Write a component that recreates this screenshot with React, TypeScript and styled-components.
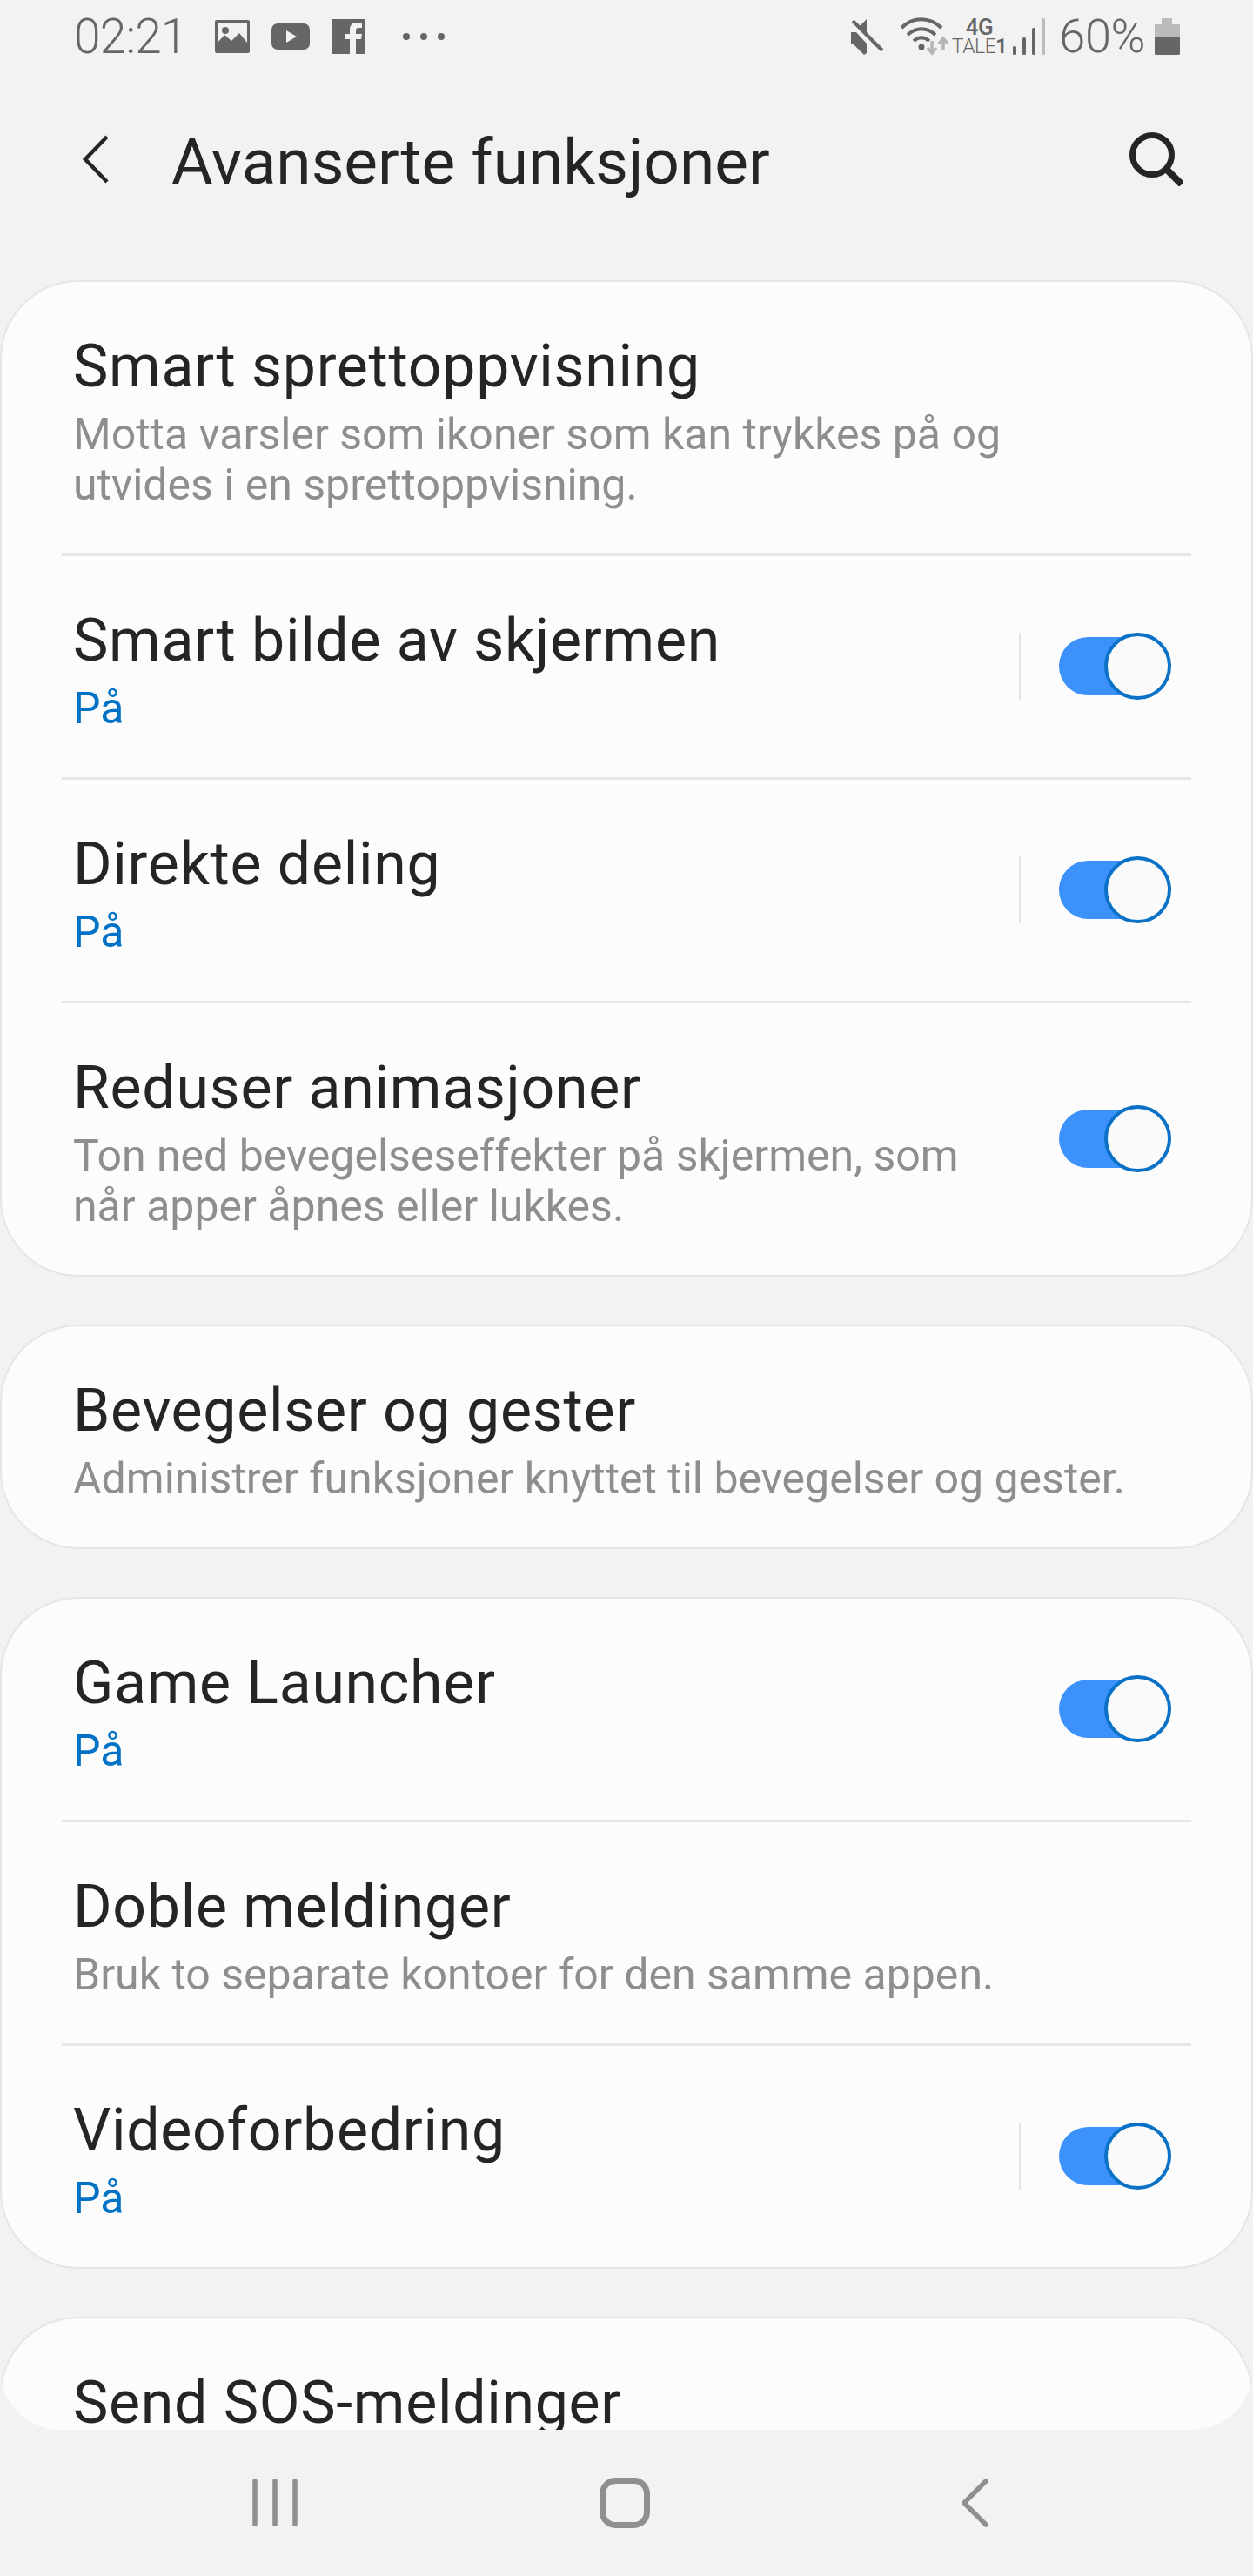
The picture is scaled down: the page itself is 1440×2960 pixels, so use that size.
import { Fragment } from "react";
import styled, { createGlobalStyle } from "styled-components";

const GlobalStyle = createGlobalStyle`
    html, body {
        margin: 0;
        padding: 0;
        background: #f2f2f2;
    }

    * {
        box-sizing: border-box;
    }
`;

const Screen = styled.div`
    display: flex;
    flex-direction: column;
    width: 1440px;
    height: 2960px;
    overflow: hidden;
    background: #f2f2f2;
    font-family: Roboto, "Noto Sans", sans-serif;
`;

const StatusBar = styled.div`
    display: flex;
    flex: none;
    align-items: center;
    justify-content: space-between;
    height: 84px;
    padding: 0 84px 0 85px;
    color: #666;
`;

const StatusGroup = styled.div`
    display: flex;
    align-items: center;
`;

const Clock = styled.span`
    font-size: 55px;
    font-weight: 300;
    letter-spacing: -0.8px;
    line-height: 1;
`;

const StatusIcon = styled.svg<{ $left: number }>`
    display: block;
    flex: none;
    margin-left: ${({ $left }) => $left}px;
`;

const NetworkLabel = styled.div`
    display: flex;
    flex-direction: column;
    align-items: center;
    width: 60px;
    margin-left: 2px;
    color: #666;
`;

const NetworkType = styled.span`
    font-size: 26px;
    font-weight: 500;
    letter-spacing: -0.6px;
    line-height: 24px;
`;

const SimLabel = styled.span`
    font-size: 23px;
    font-weight: 300;
    letter-spacing: -0.5px;
    line-height: 22px;
    white-space: nowrap;

    b {
        font-weight: 700;
    }
`;

const Battery = styled.span`
    margin-left: 15px;
    font-size: 54px;
    font-weight: 300;
    letter-spacing: -0.4px;
    line-height: 1;
`;

const Toolbar = styled.header`
    display: flex;
    flex: none;
    align-items: center;
    height: 198px;
    margin-bottom: 40px;
    padding: 0 80px 0 94px;
    color: #252525;
`;

const ToolbarTitle = styled.h1`
    flex: 1;
    margin: 6px 0 0 72px;
    font-size: 73px;
    font-weight: 400;
    line-height: 1;
`;

const Scroller = styled.main`
    display: flex;
    flex: 1;
    flex-direction: column;
    gap: 55px;
    min-height: 0;
    overflow: hidden;
    border-radius: 0 0 70px 70px;
`;

const Card = styled.section`
    flex: none;
    overflow: hidden;
    background: #fcfcfc;
    border: 2px solid #e6e6e6;
    border-radius: 90px;
`;

const Row = styled.div`
    display: flex;
    align-items: center;
    padding: 48px 92px 50px 82px;
`;

const RowText = styled.div`
    flex: 1;
    min-width: 0;
`;

const RowTitle = styled.div`
    color: #252525;
    font-size: 68px;
    letter-spacing: 0.7px;
    line-height: 98px;
    white-space: nowrap;
`;

const RowSub = styled.div<{ $on?: boolean }>`
    color: ${({ $on }) => ($on ? "#0072c6" : "#8e8e8e")};
    font-size: 50px;
    line-height: 58px;
    white-space: pre-line;
`;

const RowDivider = styled.div`
    height: 3px;
    margin: 0 69px;
    background: #e6e6e6;
`;

const VerticalRule = styled.div`
    flex: none;
    width: 2px;
    height: 77px;
    margin-right: 44px;
    background: #e4e4e4;
`;

const Switch = styled.div`
    position: relative;
    flex: none;
    width: 129px;
    height: 77px;
`;

const SwitchTrack = styled.div`
    width: 112px;
    height: 67px;
    margin-top: 5px;
    background: #3d91fb;
    border-radius: 34px;
`;

const SwitchKnob = styled.div`
    position: absolute;
    top: 0;
    right: 0;
    width: 77px;
    height: 77px;
    background: #fafafa;
    border: 4px solid #0a72c6;
    border-radius: 50%;
`;

const NavBar = styled.nav`
    display: grid;
    flex: none;
    grid-template-columns: repeat(3, 402px);
    align-items: center;
    justify-items: center;
    height: 168px;
    padding-left: 115px;
`;

interface Item {
    title: string;
    sub?: string;
    on?: boolean;
    toggle?: boolean;
    rule?: boolean;
}

const groups: Item[][] = [
    [
        {
            title: "Smart sprettoppvisning",
            sub: "Motta varsler som ikoner som kan trykkes på og\nutvides i en sprettoppvisning.",
        },
        { title: "Smart bilde av skjermen", sub: "På", on: true, toggle: true, rule: true },
        { title: "Direkte deling", sub: "På", on: true, toggle: true, rule: true },
        {
            title: "Reduser animasjoner",
            sub: "Ton ned bevegelseseffekter på skjermen, som\nnår apper åpnes eller lukkes.",
            toggle: true,
        },
    ],
    [
        {
            title: "Bevegelser og gester",
            sub: "Administrer funksjoner knyttet til bevegelser og gester.",
        },
    ],
    [
        { title: "Game Launcher", sub: "På", on: true, toggle: true },
        {
            title: "Doble meldinger",
            sub: "Bruk to separate kontoer for den samme appen.",
        },
        { title: "Videoforbedring", sub: "På", on: true, toggle: true, rule: true },
    ],
    [{ title: "Send SOS-meldinger" }],
];

const SettingRow = ({ title, sub, on, toggle, rule }: Item) => (
    <Row>
        <RowText>
            <RowTitle>{title}</RowTitle>
            {sub && <RowSub $on={on}>{sub}</RowSub>}
        </RowText>
        {rule && <VerticalRule />}
        {toggle && (
            <Switch>
                <SwitchTrack />
                <SwitchKnob />
            </Switch>
        )}
    </Row>
);

export default function App() {
    return (
        <Screen>
            <GlobalStyle />
            <StatusBar>
                <StatusGroup>
                    <Clock>02:21</Clock>
                    <StatusIcon $left={32} width="40" height="38" viewBox="0 0 40 38">
                        <rect width="40" height="38" rx="2" fill="#666" />
                        <rect x="3" y="3" width="34" height="27" fill="#f2f2f2" />
                        <circle cx="12" cy="12" r="4" fill="#666" />
                        <path d="M3 26l8-9 8 7 9-9 9 11v9H3z" fill="#666" />
                    </StatusIcon>
                    <StatusIcon $left={25} width="44" height="30" viewBox="0 0 44 30">
                        <rect width="44" height="30" rx="7" fill="#666" />
                        <path d="M17 8l12 7-12 7z" fill="#f2f2f2" />
                    </StatusIcon>
                    <StatusIcon $left={26} width="38" height="40" viewBox="0 0 38 40">
                        <rect width="38" height="40" fill="#666" />
                        <path d="M20 40V23h-5v-6h5v-5c0-5 3-8 8-8h6v6h-4c-2 0-3 1-3 3v4h7l-1 6h-6v17z" fill="#f2f2f2" />
                    </StatusIcon>
                    <StatusIcon $left={43} width="48" height="10" viewBox="0 0 48 10">
                        <circle cx="4" cy="5" r="4" fill="#666" />
                        <circle cx="24" cy="5" r="4" fill="#666" />
                        <circle cx="44" cy="5" r="4" fill="#666" />
                    </StatusIcon>
                </StatusGroup>
                <StatusGroup>
                    <StatusIcon $left={0} width="38" height="42" viewBox="0 0 38 42">
                        <path d="M0 16h6l12 13v11l-3 2L2 29H0z" fill="#666" />
                        <path d="M18 6v11l-8-8 8-8z" fill="#666" />
                        <path d="M2 3l34 34" stroke="#666" strokeWidth="4" />
                    </StatusIcon>
                    <StatusIcon $left={19} width="58" height="44" viewBox="0 0 58 44">
                        <path d="M1 12c13-13 32-13 46 0" fill="none" stroke="#666" strokeWidth="4" />
                        <path d="M8 20c10-9 22-9 32 0" fill="none" stroke="#666" strokeWidth="4" />
                        <path d="M15 27c6-5 12-5 18 0" fill="none" stroke="#666" strokeWidth="4" />
                        <circle cx="24" cy="34" r="3.5" fill="#666" />
                        <path d="M36 27v13M31 35l5 6 5-6" fill="none" stroke="#b5b5b5" strokeWidth="3.5" />
                        <path d="M49 38V25M44 30l5-6 5 6" fill="none" stroke="#b5b5b5" strokeWidth="3.5" />
                    </StatusIcon>
                    <NetworkLabel>
                        <NetworkType>4G</NetworkType>
                        <SimLabel>
                            TALE<b>1</b>
                        </SimLabel>
                    </NetworkLabel>
                    <StatusIcon $left={9} width="38" height="42" viewBox="0 0 38 42">
                        <rect x="0" y="32" width="4" height="10" rx="1.5" fill="#666" />
                        <rect x="11" y="22" width="4" height="20" rx="1.5" fill="#666" />
                        <rect x="22" y="11" width="4" height="31" rx="1.5" fill="#666" />
                        <rect x="33" y="0" width="4" height="42" rx="1.5" fill="#bbb" />
                    </StatusIcon>
                    <Battery>60%</Battery>
                    <StatusIcon $left={11} width="29" height="42" viewBox="0 0 29 42">
                        <path d="M8 0h12v7h9v14H0V7h8z" fill="#bbb" />
                        <path d="M0 21h29v20l-1 1H1l-1-1z" fill="#666" />
                    </StatusIcon>
                </StatusGroup>
            </StatusBar>

            <Toolbar>
                <svg width="31" height="56" viewBox="0 0 31 56">
                    <path d="M29 2L4 28l25 26" fill="none" stroke="#252525" strokeWidth="4.5" />
                </svg>
                <ToolbarTitle>Avanserte funksjoner</ToolbarTitle>
                <svg width="62" height="62" viewBox="0 0 62 62">
                    <circle cx="26" cy="26" r="22.5" fill="none" stroke="#252525" strokeWidth="7" />
                    <path d="M42 42l18 18" stroke="#252525" strokeWidth="8" />
                </svg>
            </Toolbar>

            <Scroller>
                {groups.map((items) => (
                    <Card key={items[0].title}>
                        {items.map((item, index) => (
                            <Fragment key={item.title}>
                                {index > 0 && <RowDivider />}
                                <SettingRow {...item} />
                            </Fragment>
                        ))}
                    </Card>
                ))}
            </Scroller>

            <NavBar>
                <svg width="52" height="54" viewBox="0 0 52 54">
                    <path d="M3 2v50M26 2v50M49 2v50" fill="none" stroke="#8f8f8f" strokeWidth="5.5" strokeLinecap="round" />
                </svg>
                <svg width="58" height="58" viewBox="0 0 58 58">
                    <rect x="3.5" y="3.5" width="51" height="51" rx="15" fill="none" stroke="#8f8f8f" strokeWidth="7" />
                </svg>
                <svg width="34" height="56" viewBox="0 0 34 56">
                    <path d="M30 3L5 28l25 25" fill="none" stroke="#8f8f8f" strokeWidth="5.5" strokeLinecap="round" strokeLinejoin="round" />
                </svg>
            </NavBar>
        </Screen>
    );
}
